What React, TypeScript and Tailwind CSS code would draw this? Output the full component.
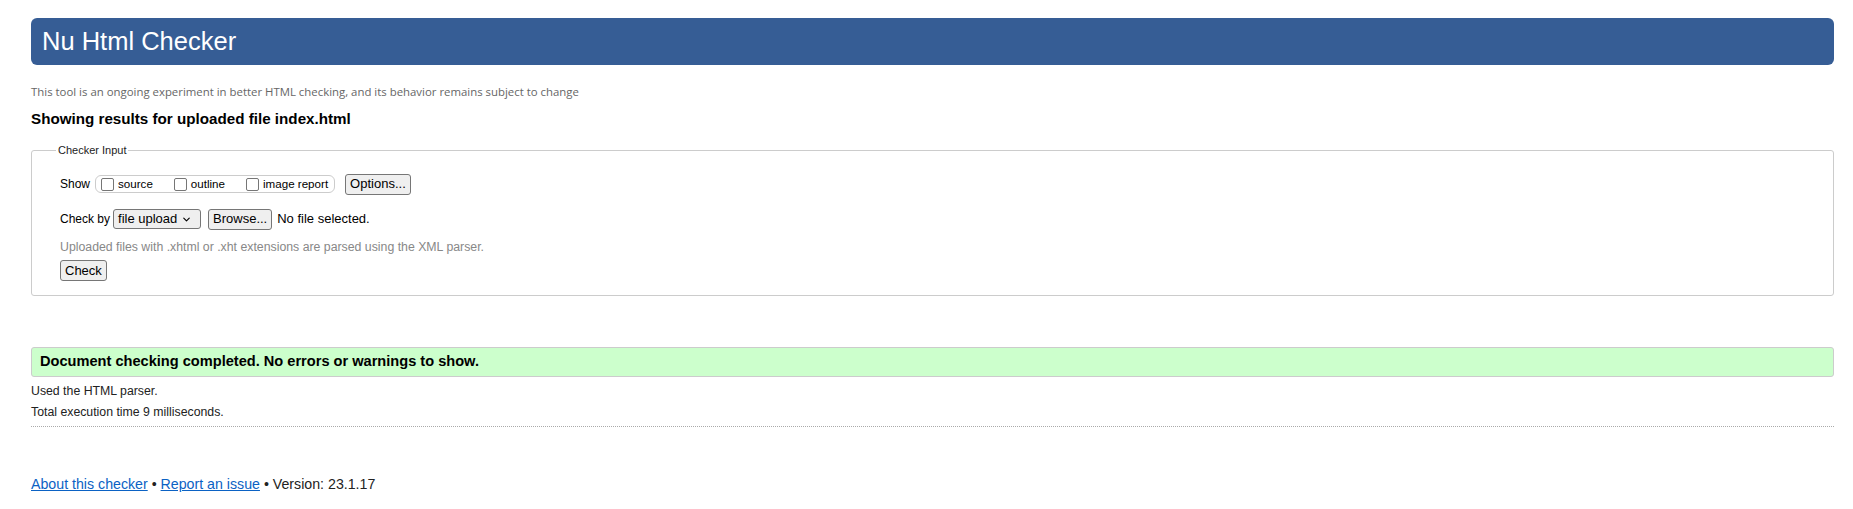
import { ChevronDown } from "lucide-react";

function Checkbox({ label, className }: { label: string; className?: string }) {
  return (
    <span className={`flex items-center ${className ?? ""}`}>
      <span className="w-[13px] h-[13px] rounded-[2px] border border-[#767676] bg-white" />
      <span className="ml-[4px] text-[11.6px] leading-[14px]">{label}</span>
    </span>
  );
}

function Button({ children, className }: { children: React.ReactNode; className?: string }) {
  return (
    <span
      className={`inline-flex items-center justify-center h-[21px] px-[4px] rounded-[3px] border border-[#767676] bg-[#efefef] text-[13px] leading-[16px] text-black ${className ?? ""}`}
    >
      {children}
    </span>
  );
}

export default function App() {
  return (
    <div className="min-h-screen bg-white pl-[31px] pr-[19px] font-['Liberation_Sans',Arial,sans-serif] text-[#222]">
      {/* Header */}
      <h1 className="mt-[18px] h-[47px] rounded-[6px] bg-[#365d95] pl-[11px] text-[25.5px] leading-[47px] font-normal text-white">
        Nu Html Checker
      </h1>

      <p className="mt-[20px] font-['Open_Sans',sans-serif] text-[11.4px] leading-[14px] text-[#666]">
        This tool is an ongoing experiment in better HTML checking, and its behavior remains subject to change
      </p>

      <h2 className="mt-[11px] text-[15.2px] leading-[18px] font-bold text-black">
        Showing results for uploaded file index.html
      </h2>

      {/* Checker input */}
      <fieldset className="mt-[15px] rounded-[3px] border border-[#ccc] pl-[28px] pb-[14px]">
        <legend className="ml-[-4px] px-[2px] text-[11px] leading-[14px] text-[#222]">Checker Input</legend>

        <div className="mt-[17px] flex items-center h-[20px] text-[12px] text-black">
          <span>Show</span>
          <span className="ml-[5px] flex items-center h-[18px] rounded-[6px] border border-[#ccc] pl-[5px] pr-[6px]">
            <Checkbox label="source" className="mr-[21px]" />
            <Checkbox label="outline" className="mr-[21px]" />
            <Checkbox label="image report" />
          </span>
          <Button className="ml-[10px]">Options...</Button>
        </div>

        <div className="mt-[14px] flex items-center h-[22px] text-[12px] text-black">
          <span>Check by</span>
          <span className="ml-[3px] inline-flex items-center h-[20px] w-[88px] rounded-[3px] border border-[#767676] bg-[#efefef] pl-[4px] text-[13px]">
            <span>file upload</span>
            <ChevronDown className="ml-auto mr-[8px] w-[11px] h-[11px]" strokeWidth={2.5} />
          </span>
          <Button className="ml-[7px]">Browse...</Button>
          <span className="ml-[5px] text-[13px]">No file selected.</span>
        </div>

        <p className="mt-[10px] text-[12.3px] leading-[14px] text-[#888]">
          Uploaded files with .xhtml or .xht extensions are parsed using the XML parser.
        </p>

        <div className="mt-[6px] flex">
          <Button>Check</Button>
        </div>
      </fieldset>

      {/* Result */}
      <div className="mt-[51px] h-[30px] flex items-center rounded-[3px] border border-[#ccc] bg-[#ccffcc] pl-[8px] text-[14.6px] font-bold text-black">
        Document checking completed. No errors or warnings to show.
      </div>

      <div className="mt-[4px] text-[12.3px] leading-[21px] text-[#222]">
        <p>Used the HTML parser.</p>
        <p>Total execution time 9 milliseconds.</p>
      </div>
      <div className="mt-[3px] border-b border-dotted border-[#aaa]" />

      {/* Footer */}
      <p className="mt-[48px] text-[14.2px] leading-[18px] text-[#222]">
        <a href="#" className="text-[#0b62c4] underline">About this checker</a>
        {" • "}
        <a href="#" className="text-[#0b62c4] underline">Report an issue</a>
        {" • Version: 23.1.17"}
      </p>
    </div>
  );
}
